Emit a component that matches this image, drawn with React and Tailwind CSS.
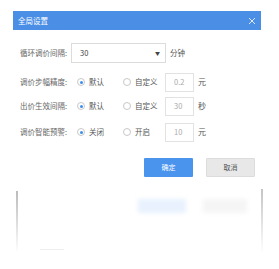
import React from 'react';

const font = { fontFamily: '"Noto Sans CJK SC", "Noto Sans", sans-serif' };

const Radio = ({ checked, label }) => (
    <div className="flex items-center gap-[4px]">
        <span className="w-[8px] h-[8px] rounded-full border border-[#c8c8c8] bg-white flex items-center justify-center">
            {checked && <span className="w-[3px] h-[3px] rounded-full bg-[#3d8ee9]" />}
        </span>
        <span className="text-[7.5px] text-[#555]">{label}</span>
    </div>
);

const OptionRow = ({ label, first, second, value, unit }) => (
    <div className="flex items-center h-[20px]">
        <span className="w-[57px] text-[7.5px] text-[#666]">{label}</span>
        <div className="w-[46px]">
            <Radio checked label={first} />
        </div>
        <div className="w-[42px]">
            <Radio label={second} />
        </div>
        <div className="w-[29px] h-[19px] border border-[#e2e2e2] flex items-center pl-[8px] text-[7.5px] text-[#aaa]">
            {value}
        </div>
        <span className="ml-[4px] text-[8px] text-[#555]">{unit}</span>
    </div>
);

const App = () => {
    return (
        <div className="w-[279px] h-[269px] bg-white overflow-hidden" style={font}>
            <div className="ml-[13px] pt-[11px] w-[248px]">
                {/* header */}
                <div className="h-[19px] bg-[#4a8ee6] flex items-center justify-between pl-[5px] pr-[5px]">
                    <span className="text-[7.5px] text-white">全局设置</span>
                    <svg width="8" height="8" viewBox="0 0 8 8">
                        <path d="M1 1 L7 7 M7 1 L1 7" stroke="#dbe9fb" strokeWidth="1" />
                    </svg>
                </div>

                {/* body */}
                <div className="pl-[7px] pt-[13px]">
                    <div className="flex items-center h-[20px]">
                        <span className="w-[51px] text-[7.5px] text-[#666]">循环调价间隔:</span>
                        <div className="w-[95px] h-[20px] border border-[#dcdcdc] flex items-center justify-between pl-[8px] pr-[5px]">
                            <span className="text-[7.5px] text-[#444]">30</span>
                            <span className="text-[5px] text-[#444]">▼</span>
                        </div>
                        <span className="ml-[4px] text-[7.5px] text-[#555]">分钟</span>
                    </div>

                    <div className="mt-[9px] flex flex-col gap-[4px]">
                        <OptionRow label="调价步幅精度:" first="默认" second="自定义" value="0.2" unit="元" />
                        <OptionRow label="出价生效间隔:" first="默认" second="自定义" value="30" unit="秒" />
                        <div className="mt-[2px]">
                            <OptionRow label="调价智能预警:" first="关闭" second="开启" value="10" unit="元" />
                        </div>
                    </div>

                    <div className="flex justify-end gap-[13px] pr-[6px] mt-[16px]">
                        <button className="w-[49px] h-[19px] bg-[#4a94ee] text-white text-[7px] rounded-[1px]">确定</button>
                        <button className="w-[49px] h-[19px] bg-[#e8e8e8] border border-[#dcdcdc] text-[#555] text-[7px] rounded-[1px]">取消</button>
                    </div>
                </div>
            </div>

            {/* blurred reflection below */}
            <div className="relative mx-[16px] mt-[12px] h-[66px]">
                <div className="absolute left-0 top-[2px] w-[2px] h-[62px] bg-gradient-to-b from-[#bbbbbb] to-white blur-[0.5px]" />
                <div className="absolute right-0 top-0 w-[2px] h-[64px] bg-gradient-to-b from-[#c4c4c4] to-white blur-[0.5px]" />
                <div className="absolute left-[122px] top-[10px] w-[48px] h-[14px] bg-[#e8f1fd] blur-[2px]" />
                <div className="absolute left-[187px] top-[10px] w-[44px] h-[14px] bg-[#f5f5f5] blur-[2px]" />
                <div className="absolute left-[24px] top-[60px] w-[24px] h-[1px] bg-[#eeeeee]" />
            </div>
        </div>
    );
};

export default App;
